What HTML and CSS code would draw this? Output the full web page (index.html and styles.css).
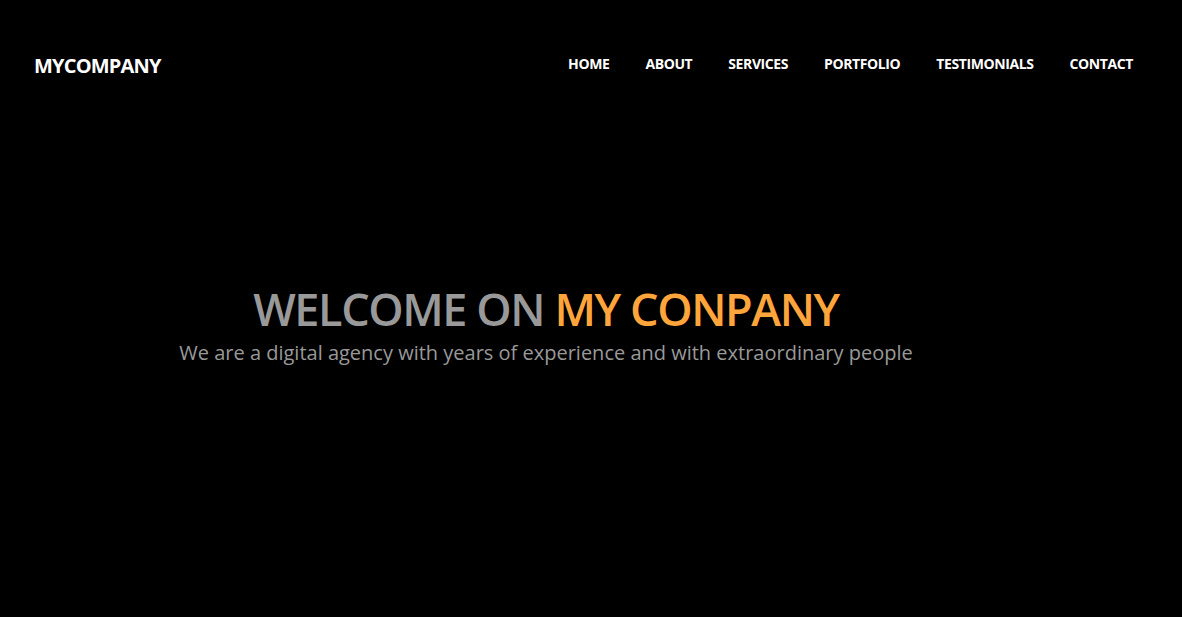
FILE: index.html
```html
<!DOCTYPE html>
<html lang="en">
<head>
<meta charset="utf-8">
<title>MyCompany</title>
<link rel="stylesheet" href="styles.css">
</head>
<body>
<header class="header">
  <div class="logo">MYCOMPANY</div>
  <nav class="nav">
    <a href="#">HOME</a>
    <a href="#">ABOUT</a>
    <a href="#">SERVICES</a>
    <a href="#">PORTFOLIO</a>
    <a href="#">TESTIMONIALS</a>
    <a href="#">CONTACT</a>
  </nav>
</header>
<section class="hero">
  <h1 class="title">WELCOME ON <span class="accent">MY CONPANY</span></h1>
  <p class="subtitle">We are a digital agency with years of experience and with extraordinary people</p>
</section>
</body>
</html>
```
FILE: styles.css
```css
* { box-sizing: border-box; }
html, body { margin: 0; padding: 0; }
body {
  background: #000;
  font-family: "Open Sans", "Liberation Sans", sans-serif;
  height: 617px;
  overflow: hidden;
}
.header {
  display: flex;
  justify-content: space-between;
  align-items: flex-start;
  padding: 50px 49px 0 34px;
  height: 130px;
}
.logo {
  color: #fff;
  font-weight: 700;
  font-size: 20px;
  letter-spacing: -0.8px;
  line-height: 30px;
  margin-top: 1px;
}
.nav {
  display: flex;
  gap: 36px;
  line-height: 28px;
}
.nav a {
  color: #fff;
  text-decoration: none;
  font-weight: 700;
  font-size: 14px;
  letter-spacing: -0.4px;
}
.hero {
  width: 1092px;
  text-align: center;
  padding-top: 149px;
}
.title {
  margin: 0;
  font-weight: 600;
  font-size: 45px;
  line-height: 60px;
  color: #999;
  letter-spacing: -1.4px;
}
.accent { color: #ffa53b; }
.subtitle {
  margin: 0;
  color: #999;
  font-size: 20px;
  line-height: 28px;
}
```
